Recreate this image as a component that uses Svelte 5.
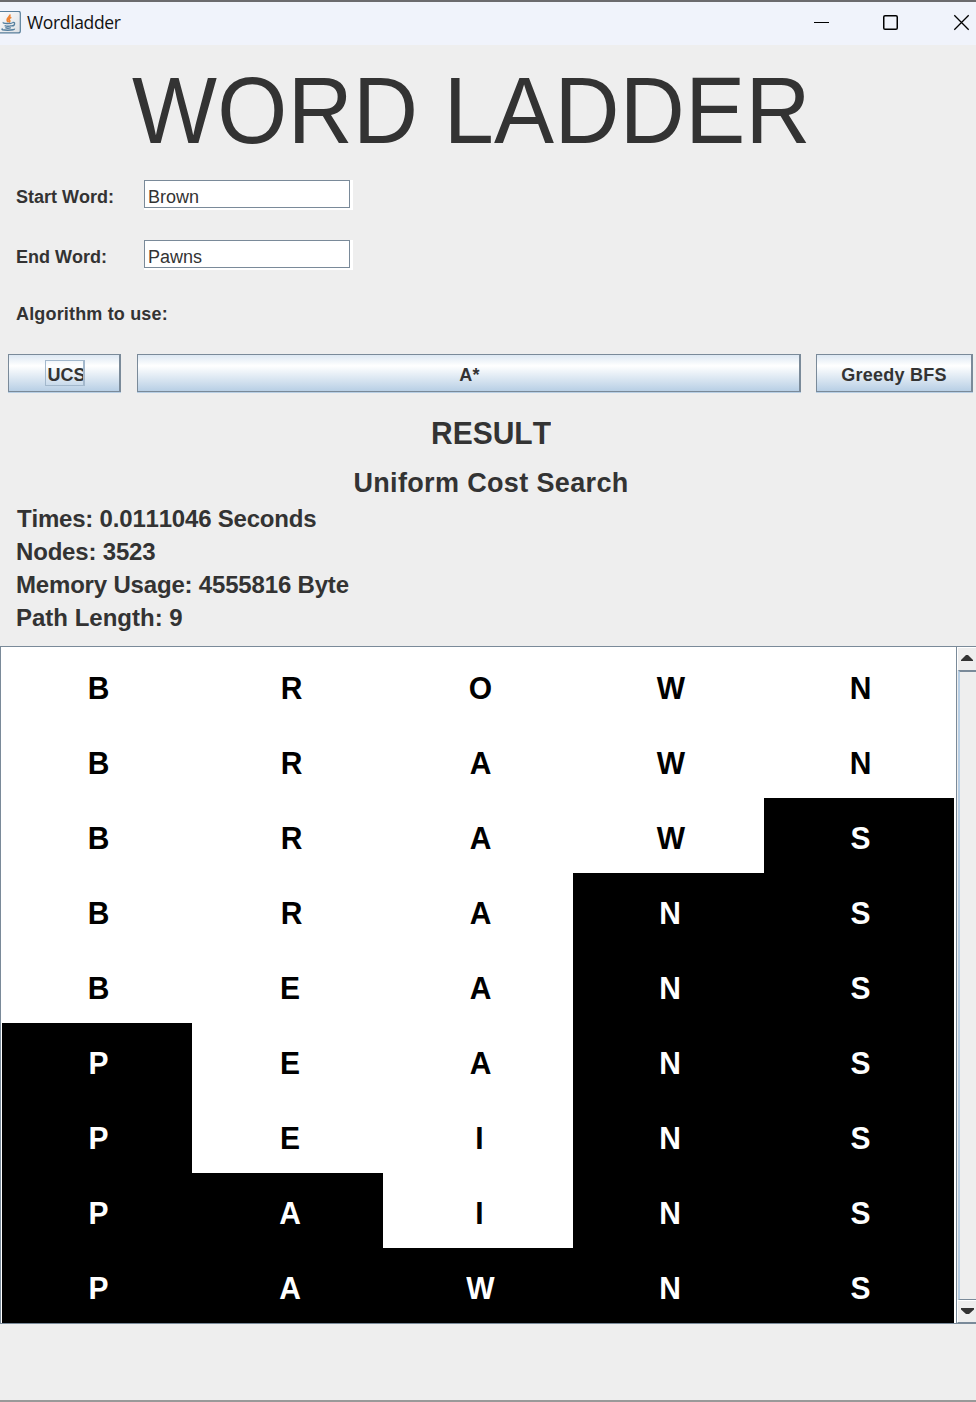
<script>
  const words = ['BROWN', 'BRAWN', 'BRAWS', 'BRANS', 'BEANS', 'PEANS', 'PEINS', 'PAINS', 'PAWNS'];
  const target = words[words.length - 1];
  let start = $state('Brown');
  let end = $state('Pawns');
</script>

<div class="window">
  <header>
    <svg class="java" width="22" height="24" viewBox="0 0 22 24">
      <defs>
        <linearGradient id="tile" x1="0" y1="0" x2="1" y2="1">
          <stop offset="0" stop-color="#fff" /><stop offset="1" stop-color="#dcdfe3" />
        </linearGradient>
      </defs>
      <rect x="-4" y=".3" width="24.3" height="21.6" rx="2" fill="url(#tile)" stroke="#597f9b" stroke-width="1.2" />
      <path d="M9.8 3.5C11 6.2 4.8 7.4 8.1 11M11.3 6.2C8.5 7.5 8.5 8.2 9.7 9.5Q10.2 10.3 8.7 11.5" fill="none" stroke="#ee8434" stroke-width="1.8" />
      <path d="M3.5 11.3Q2.4 12.5 7 12.5T12 11.7M12.3 11.6Q15 10.7 14.5 13T11.7 14.7M4.6 14.6Q8 15.8 11.6 14.6M5.3 16.7Q8 17.7 10.8 16.6M2.7 17.7Q0 19 7.7 19.2Q14.8 19 14.5 17.6" fill="none" stroke="#557f9e" stroke-width="1.4" />
    </svg>
    <span class="caption">Wordladder</span>
    <svg class="controls" width="164" height="20" viewBox="0 0 164 20" fill="none" stroke="#000">
      <path d="M2 9.5H17" />
      <rect x="71.75" y="2.75" width="13.5" height="13.5" rx="1.3" stroke-width="1.5" />
      <path d="M142.3 2.3L156.7 16.7M156.7 2.3L142.3 16.7" stroke-width="1.3" />
    </svg>
  </header>

  <h1>WORD LADDER</h1>

  <div class="form">
    <label for="start">Start Word:</label><div class="field"><input id="start" bind:value={start} /></div>
    <label for="end">End Word:</label><div class="field"><input id="end" bind:value={end} /></div>
  </div>
  <p class="algo">Algorithm to use:</p>
  <div class="buttons">
    <button><span class="focus">UCS</span></button>
    <button class="wide">A*</button>
    <button>Greedy BFS</button>
  </div>

  <h2>RESULT</h2>
  <h3>Uniform Cost Search</h3>
  <div class="stats">
    <p class="times">Times: 0.0111046 Seconds</p>
    <p>Nodes: 3523</p>
    <p>Memory Usage: 4555816 Byte</p>
    <p class="length">Path Length: 9</p>
  </div>

  <div class="pane">
    <div class="grid">
      {#each words as word}
        {#each word as letter, i}
          <div class="cell" class:hit={letter === target[i]} class:second={i === 1} class:wider={'OAW'.includes(letter)} class:r={letter === 'R'}><span>{letter}</span></div>
        {/each}
      {/each}
    </div>
    <div class="scroll">
      <div class="arrow up"><svg width="12" height="6" viewBox="0 0 12 6"><path d="M0 6V5L5 0H7L12 5V6Z" fill="#333" /></svg></div>
      <div class="thumb"></div>
      <div class="arrow down"><svg width="13" height="6" viewBox="0 0 13 6"><path d="M0 0V1.5L5 6H8L13 1.5V0Z" fill="#333" /></svg></div>
    </div>
  </div>
  <div class="bottom"></div>
</div>

<style>
  :global(body) { margin: 0; background: #eee; overflow: hidden; }
  .window {
    width: 976px; height: 1402px; box-sizing: border-box; overflow: hidden;
    display: flex; flex-direction: column; border-top: 2px solid #6b6b6d;
    background: #eee; color: #333; font-family: "Liberation Sans", Arial, sans-serif;
    font-kerning: none;
  }
  h1, h2, h3, p { margin: 0; white-space: nowrap; }
  header { height: 43px; flex: none; display: flex; align-items: center; background: #f0f3fb; color: #111; }
  .java { margin-top: -2px; flex: none; }
  .caption { margin: -3px 0 0 5px; font: 17.5px/24px "Open Sans", sans-serif; letter-spacing: -.35px; }
  .controls { margin: -1px 0 0 auto; flex: none; }
  h1 { height: 131px; flex: none; padding-left: 132px; font-size: 90px; line-height: 133px; font-weight: 400; letter-spacing: .35px; transform: scaleY(1.045); }
  .form { flex: none; display: grid; grid-template-columns: 128px 209px; row-gap: 30px; padding: 4px 0 0 16px; }
  label { font-size: 18px; font-weight: 700; line-height: 34px; height: 30px; }
  .field { background: #fff; height: 30px; width: 209px; }
  input {
    display: block; box-sizing: border-box; width: 206px; height: 28px; margin: 0; padding: 6px 0 0 3px;
    border: 1px solid #7a8a99; border-radius: 0; outline: 0; background: #fff; color: #333;
    font: 18px/20px "Liberation Sans", sans-serif;
  }
  .algo { flex: none; height: 83px; padding: 34px 0 0 16px; box-sizing: border-box; font-size: 18px; line-height: 21px; font-weight: 700; letter-spacing: .17px; }
  .buttons { flex: none; display: grid; grid-template-columns: 113px 664px 157px; column-gap: 16px; padding-left: 8px; height: 40px; margin-top: 1px; }
  button {
    display: flex; align-items: center; justify-content: center; box-sizing: border-box;
    height: 38px; padding: 3px 0 0; border: solid #7a8a99; border-width: 1px 2px 1px 1px; border-radius: 0;
    background: linear-gradient(#dde8f3 0%, #fff 30%, #b8cfe5 100%); box-shadow: 0 1px #b8cfe5;
    color: #333; font: 700 18px/22px "Liberation Sans", sans-serif; font-kerning: none; letter-spacing: .25px;
  }
  .wide { padding-left: 2px; }
  button:last-child { margin-left: -1px; margin-right: 1px; }
  .focus { box-sizing: border-box; width: 40px; height: 26px; padding: 3px 0 0 2px; margin: -4px 0 0 1px; border: solid #a3b8cc; border-width: 1px 2px 1px 1px; overflow: hidden; letter-spacing: 0; text-align: left; }
  h2 { flex: none; margin-top: 22px; padding-left: 6px; height: 36px; text-align: center; font-size: 30px; line-height: 36px; transform: scaleY(1.04); }
  h3 { flex: none; margin-top: 15px; padding-left: 6px; height: 32px; text-align: center; font-size: 27px; line-height: 32px; letter-spacing: .35px; }
  .stats { flex: none; padding-left: 16px; margin-top: 3px; height: 144px; font-size: 24px; line-height: 33px; font-weight: 700; letter-spacing: -.18px; }
  .times { padding-left: 1px; letter-spacing: -.2px; }
  .length { letter-spacing: 0; }
  .pane { flex: none; height: 678px; box-sizing: border-box; border: solid #7a8a99; border-width: 1px 0 1px 1px; background: #fff; display: flex; }
  .grid { width: 952px; margin: 1px 0 0 1px; height: 675px; display: grid; grid-template-columns: 190px 191px 190px 191px 190px; grid-template-rows: repeat(9, 75px); }
  .cell { display: flex; align-items: center; justify-content: center; padding: 7px 0 0 3px; color: #000; font-size: 30px; line-height: 36px; font-weight: 700; }
  .cell span { transform: scaleY(1.05); }
  .wider { padding-left: 5px; }
  .second { padding-left: 5px; }
  .r { padding-left: 8px; }
  .hit { background: #000; color: #fff; }
  .scroll { flex: 1; margin-left: 2px; box-sizing: border-box; border-left: 1px solid #7a8a99; background: #eee; display: flex; flex-direction: column; }
  .arrow { flex: none; height: 23px; box-sizing: border-box; border: solid #fff; border-width: 1px 0 0 1px; display: flex; justify-content: center; padding-top: 7px; }
  .down { border-bottom: 1px solid #7a8a99; }
  .thumb { flex: 1; margin-left: 1px; border: solid #7a8a99; border-width: 2px 0 1px; border-left: 2px solid #b8cfe5; }
  .bottom { margin-top: auto; height: 2px; background: #999; }
</style>
